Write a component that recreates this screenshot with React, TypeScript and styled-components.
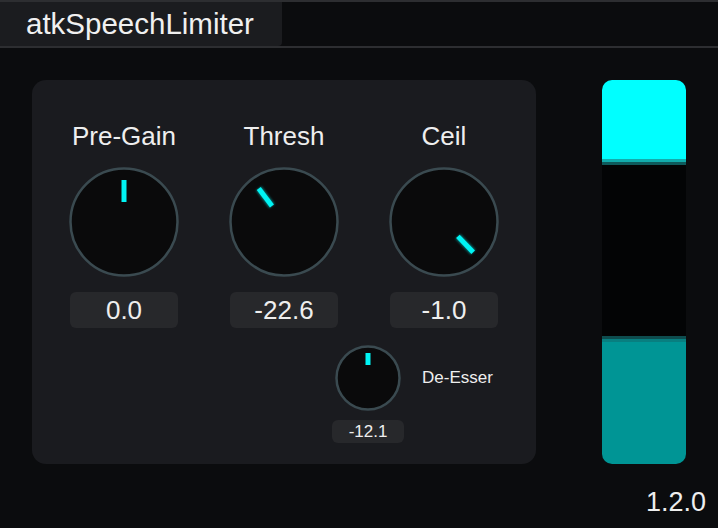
import React from "react";
import styled, { createGlobalStyle } from "styled-components";

const GlobalStyle = createGlobalStyle`
  html, body {
    margin: 0;
    padding: 0;
    background: #0b0c0e;
  }
  body {
    font-family: "Liberation Sans", Arial, sans-serif;
    color: #ececec;
  }
`;

const Page = styled.div`
  width: 718px;
  height: 528px;
  display: flex;
  flex-direction: column;
  background: #0b0c0e;
  overflow: hidden;
`;

const Header = styled.div`
  height: 44px;
  display: flex;
  border-top: 2px solid #2d2e31;
  border-bottom: 2px solid #2d2e31;
`;

const TitleTab = styled.div`
  width: 282px;
  background: #1b1c1f;
  border-bottom-right-radius: 4px;
  display: flex;
  align-items: center;
  padding-left: 26px;
  box-sizing: border-box;
  font-size: 29.5px;
  color: #f0f0f0;
`;

const Main = styled.div`
  display: flex;
  padding: 32px 0 0 32px;
`;

const Panel = styled.div`
  width: 504px;
  height: 384px;
  box-sizing: border-box;
  background: #1a1b1f;
  border-radius: 14px;
  padding: 0 0 0 12px;
  display: flex;
  flex-direction: column;
`;

const KnobRow = styled.div`
  display: grid;
  grid-template-columns: repeat(3, 160px);
`;

const KnobColumn = styled.div`
  display: flex;
  flex-direction: column;
  align-items: center;
`;

const Label = styled.div`
  height: 56px;
  margin: 28px 0 3px;
  font-size: 26px;
  line-height: 56px;
  color: #eeeeee;
`;

const ValueBox = styled.div<{ $small?: boolean }>`
  width: ${({ $small }) => ($small ? "72px" : "108px")};
  height: ${({ $small }) => ($small ? "23px" : "36px")};
  margin-top: ${({ $small }) => ($small ? "9px" : "15px")};
  border-radius: 6px;
  background: #27282b;
  display: flex;
  align-items: center;
  justify-content: center;
  font-size: ${({ $small }) => ($small ? "17px" : "26px")};
  color: #eeeeee;
`;

const EsserRow = styled.div`
  display: flex;
  align-items: flex-start;
  margin-top: 17px;
  padding-left: 288px;
`;

const EsserColumn = styled.div`
  display: flex;
  flex-direction: column;
  align-items: center;
`;

const EsserLabel = styled.div`
  margin: 22px 0 0 18px;
  font-size: 17px;
  line-height: 22px;
  color: #eeeeee;
`;

const Meter = styled.div`
  margin-left: 66px;
  width: 84px;
  height: 384px;
  border-radius: 10px;
  overflow: hidden;
  display: flex;
  flex-direction: column;
  background: #030405;
`;

const MeterBlock = styled.div<{ $h?: number; $color: string }>`
  height: ${({ $h }) => ($h ? `${$h}px` : "auto")};
  flex: ${({ $h }) => ($h ? "none" : "1")};
  background: ${({ $color }) => $color};
`;

const Footer = styled.div`
  flex: 1;
  display: flex;
  justify-content: flex-end;
  align-items: center;
  padding: 12px 12px 0 0;
  font-size: 27px;
  color: #eeeeee;
`;

type KnobProps = { size: number; angle: number; r0: number; r1: number; w: number };

const Knob = ({ size, angle, r0, r1, w }: KnobProps) => {
  const c = size / 2;
  const a = (angle * Math.PI) / 180;
  const x0 = c + r0 * Math.sin(a);
  const y0 = c - r0 * Math.cos(a);
  const x1 = c + r1 * Math.sin(a);
  const y1 = c - r1 * Math.cos(a);
  const id = `glow${size}_${angle}`.replace("-", "m");
  return (
    <svg width={size} height={size} viewBox={`0 0 ${size} ${size}`}>
      <defs>
        <filter id={id} x="-50%" y="-50%" width="200%" height="200%">
          <feGaussianBlur stdDeviation="1.2" />
        </filter>
      </defs>
      <circle cx={c} cy={c} r={c - 1.5} fill="#0a0a0b" stroke="#3a4a50" strokeWidth="2.5" />
      <line x1={x0} y1={y0} x2={x1} y2={y1} stroke="#00e5e5" strokeWidth={w + 2} opacity="0.45" filter={`url(#${id})`} />
      <line x1={x0} y1={y0} x2={x1} y2={y1} stroke="#00f4f4" strokeWidth={w} />
    </svg>
  );
};

const knobs = [
  { label: "Pre-Gain", value: "0.0", angle: 0 },
  { label: "Thresh", value: "-22.6", angle: -37 },
  { label: "Ceil", value: "-1.0", angle: 136 },
];

export default function App() {
  return (
    <Page>
      <GlobalStyle />
      <Header>
        <TitleTab>atkSpeechLimiter</TitleTab>
      </Header>
      <Main>
        <Panel>
          <KnobRow>
            {knobs.map((k) => (
              <KnobColumn key={k.label}>
                <Label>{k.label}</Label>
                <Knob size={110} angle={k.angle} r0={20} r1={42} w={5} />
                <ValueBox>{k.value}</ValueBox>
              </KnobColumn>
            ))}
          </KnobRow>
          <EsserRow>
            <EsserColumn>
              <Knob size={66} angle={0} r0={13} r1={25} w={5} />
              <ValueBox $small>-12.1</ValueBox>
            </EsserColumn>
            <EsserLabel>De-Esser</EsserLabel>
          </EsserRow>
        </Panel>
        <Meter>
          <MeterBlock $h={79} $color="#00ffff" />
          <MeterBlock $h={3} $color="#12adad" />
          <MeterBlock $h={3} $color="#0e5b5c" />
          <MeterBlock $color="#030405" />
          <MeterBlock $h={3} $color="#0e4d4f" />
          <MeterBlock $h={3} $color="#087f80" />
          <MeterBlock $h={122} $color="#009595" />
        </Meter>
      </Main>
      <Footer>1.2.0</Footer>
    </Page>
  );
}
